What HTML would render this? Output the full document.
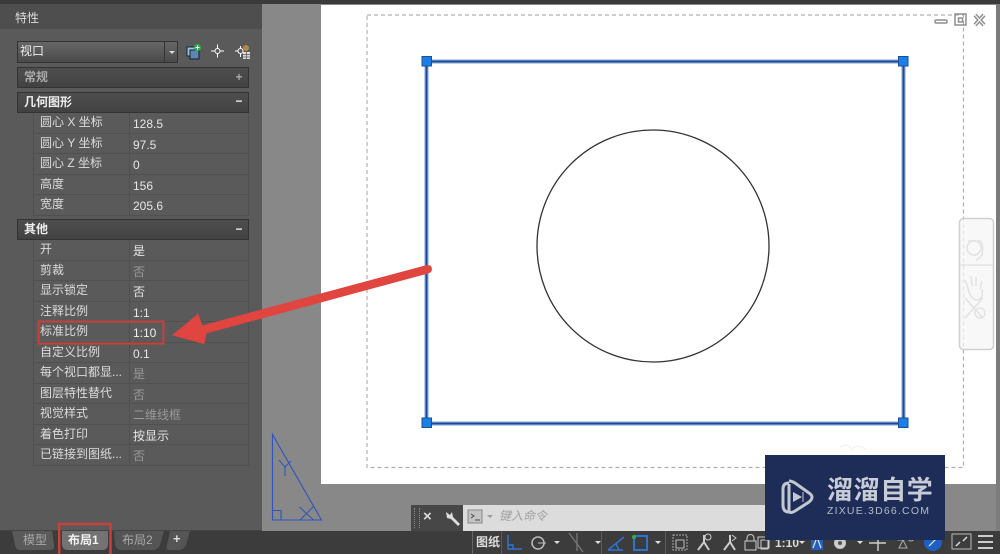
<!DOCTYPE html>
<html><head><meta charset="utf-8">
<style>
html,body{margin:0;padding:0;background:#888}
#r{position:relative;width:1000px;height:554px;overflow:hidden;background:#888;font-family:"Liberation Sans","Noto Sans CJK SC",sans-serif;font-size:12px;color:#e0e0e0;filter:blur(.35px)}
#r div,#r span{position:absolute;white-space:nowrap}
.h{left:17px;width:232px;height:20px;background:linear-gradient(#4e4e4e,#424242);border:1px solid #333;box-sizing:border-box;line-height:19px;font-weight:bold;color:#eee;text-indent:6px}
.s{left:217px;width:8px;text-align:center;font-weight:bold;text-indent:0}
.row{left:33px;width:216px;height:20.5px;border-bottom:1px solid #505050;box-sizing:border-box}
.l{left:7px;top:1px;line-height:16px;color:#dcdcdc}
.v{left:100px;top:3px;line-height:16px;color:#e6e6e6}
.d{color:#999}
</style></head><body><div id="r">
<div style="left:0;top:0;width:1000px;height:4px;background:#3a3a3a"></div>
<div style="left:0;top:4px;width:262px;height:527px;background:#5a5a5a"></div>
<div style="left:0;top:4px;width:262px;height:25px;background:#4e4e4e"></div>
<div style="left:15px;top:10px;font-size:12px;color:#ddd;line-height:17px">特性</div>

<div style="left:17px;top:41px;width:161px;height:22px;background:linear-gradient(#666,#4a4a4a);border:1px solid #333;box-sizing:border-box"></div>
<div style="left:20px;top:43px;line-height:17px;color:#eee">视口</div>
<div style="left:164px;top:42px;width:1px;height:20px;background:#333"></div>
<div style="left:169px;top:51px;width:0;height:0;border:3px solid transparent;border-top:3px solid #ddd"></div>
<svg style="position:absolute;left:180px;top:38px" width="75" height="28" viewBox="0 0 75 28">
<rect x="7" y="9" width="8" height="9" fill="#9fc0dd" stroke="#123"/><rect x="10" y="12" width="9" height="9" fill="#5d87b0" stroke="#123"/><circle cx="17.500" cy="9.500" r="3.500" fill="#2fae4a"/><path d="M15.500 9.500h4M17.500 7.500v4" stroke="#fff"/>
<circle cx="37.500" cy="13" r="2.500" fill="none" stroke="#fff"/><path d="M31 13h4M40 13h4M37.500 6.500v4M37.500 15.500v4" stroke="#fff"/>
<circle cx="60.500" cy="13" r="2.500" fill="none" stroke="#fff"/><path d="M55 13h3M60.500 8v2M60.500 16v3" stroke="#fff"/><circle cx="66" cy="10" r="3" fill="#b08a4a"/><rect x="63" y="14" width="7" height="7" fill="#ddd"/><path d="M63 16.500h7M63 19h7M66.500 14v7" stroke="#555" stroke-width=".7"/>
</svg>

<div class="h" style="top:67px;height:21px;color:#aaa">常规<span class="s" style="top:0">+</span></div>
<div class="h" style="top:92px;height:21px">几何图形<span class="s" style="top:-1px">−</span></div>
<div class="h" style="top:219px;height:21px">其他<span class="s" style="top:0">−</span></div>

<div style="left:33px;top:113px;width:1px;height:102px;background:#505050"></div>
<div style="left:129px;top:113px;width:1px;height:102px;background:#505050"></div>
<div style="left:248px;top:113px;width:1px;height:102px;background:#505050"></div>
<div style="left:33px;top:240px;width:1px;height:226px;background:#505050"></div>
<div style="left:129px;top:240px;width:1px;height:226px;background:#505050"></div>
<div style="left:248px;top:240px;width:1px;height:226px;background:#505050"></div>

<div class="row" style="top:113px"><span class="l">圆心 X 坐标</span><span class="v">128.5</span></div>
<div class="row" style="top:133.500px"><span class="l">圆心 Y 坐标</span><span class="v">97.5</span></div>
<div class="row" style="top:154px"><span class="l">圆心 Z 坐标</span><span class="v">0</span></div>
<div class="row" style="top:174.500px"><span class="l">高度</span><span class="v">156</span></div>
<div class="row" style="top:195px"><span class="l">宽度</span><span class="v">205.6</span></div>

<div class="row" style="top:240px"><span class="l">开</span><span class="v">是</span></div>
<div class="row" style="top:260.500px"><span class="l">剪裁</span><span class="v d">否</span></div>
<div class="row" style="top:281px"><span class="l">显示锁定</span><span class="v">否</span></div>
<div class="row" style="top:301.500px"><span class="l">注释比例</span><span class="v">1:1</span></div>
<div class="row" style="top:322px"><span class="l">标准比例</span><span class="v" style="color:#f0f0f0">1:10</span></div>
<div class="row" style="top:342.500px"><span class="l">自定义比例</span><span class="v">0.1</span></div>
<div class="row" style="top:363px"><span class="l">每个视口都显...</span><span class="v d">是</span></div>
<div class="row" style="top:383.500px"><span class="l">图层特性替代</span><span class="v d">否</span></div>
<div class="row" style="top:404px"><span class="l">视觉样式</span><span class="v d">二维线框</span></div>
<div class="row" style="top:424.500px"><span class="l">着色打印</span><span class="v">按显示</span></div>
<div class="row" style="top:445px"><span class="l">已链接到图纸...</span><span class="v d">否</span></div>

<div style="left:321px;top:5px;width:675px;height:479px;background:#fff"></div>
<div style="left:996px;top:4px;width:4px;height:527px;background:#7c7c7c"></div>

<svg style="position:absolute;left:0;top:0" width="1000" height="554" viewBox="0 0 1000 554">
<rect x="367" y="15" width="596.500" height="452.500" fill="none" stroke="#b0b0b0" stroke-width="1.200" stroke-dasharray="4 3"/>
<path d="M840 447q8-5 12 3q5-8 14 0" fill="none" stroke="#eee"/>
<rect x="426.500" y="61.500" width="477" height="362" fill="none" stroke="#bcd0f0" stroke-width="5"/>
<rect x="426.500" y="61.500" width="477" height="362" fill="none" stroke="#1f4a96" stroke-width="2.200"/>
<circle cx="653" cy="246" r="116" fill="none" stroke="#333" stroke-width="1.300"/>
<g fill="#1c7fe8" stroke="#1a4f9a"><rect x="422" y="56.500" width="9.500" height="9.500"/><rect x="898.500" y="56.500" width="9.500" height="9.500"/><rect x="422" y="418" width="9.500" height="9.500"/><rect x="898.500" y="418" width="9.500" height="9.500"/></g>
<g fill="none" stroke="#2f55bb" stroke-width="1.100"><path d="M272.500 434.500V520H321.500ZM272.500 510.500h8.500V520M279 460l6 7 6-6M285 467v9M299.500 507l14 13M300 520l13-13"/></g>
<g fill="none" stroke="#8f8f8f" stroke-width="1.500"><rect x="935" y="20" width="12" height="3" rx="1"/><rect x="955" y="14" width="11" height="11"/><rect x="958.500" y="18" width="4" height="4"/><path d="M975 15l9 10M984 15l-9 10" stroke-width="4"/><path d="M975 15l9 10M984 15l-9 10" stroke="#f2f2f2" stroke-width="1.300"/></g>
<rect x="959.500" y="218.500" width="34" height="131" rx="4" fill="#f6f6f6" fill-opacity=".75" stroke="#cfcfcf" stroke-width="1.500"/>
<g fill="none" stroke="#e2e2e2" stroke-width="1.500"><circle cx="974" cy="248" r="7"/><path d="M968 241h12q4 3 2 14l-6 6M960 265h33"/><path d="M968 288l-3-8M972 286l-1-10M976 286v-9M980 289l2-8M968 288q2 10 8 12 8 0 6-11"/><path d="M965 298l18 20M983 298l-18 20"/><circle cx="980" cy="313" r="5"/></g>
<path d="M173 335L198 314.500L202 326L427 265.500Q431 265 431.500 269Q431.500 272 428 273L206 333L204 343.500Z" fill="#e0453f" stroke="#e0453f" stroke-linejoin="round"/>
<rect x="38.500" y="321.500" width="125" height="22" fill="none" stroke="#c8403c" stroke-width="2"/>
</svg>

<div style="left:0;top:531px;width:1000px;height:23px;background:#3c3c3c"></div>
<div style="left:0;top:530px;width:262px;height:1px;background:#444"></div>
<svg style="position:absolute;left:0;top:520px" width="200" height="34" viewBox="0 0 200 34">
<path d="M12 11H52L54 25Q55 30 50 30H20Q16 30 15 25Z" fill="#5a5a5a"/>
<path d="M62 11H108V24Q108 30 102 30H68Q62 30 62 24Z" fill="#737373"/>
<path d="M114 11H164L160 25Q158 30 152 30H122Q116 30 115 25Z" fill="#555"/>
<path d="M170 11H190L186 25Q184 30 178 30H169Q165 30 167 25Z" fill="#555"/>
<path d="M59.200 35V4H110.500V35" fill="none" stroke="#c8403c" stroke-width="2.500"/>
</svg>
<div style="left:23px;top:532px;line-height:16px;color:#a8a8a8">模型</div>
<div style="left:68px;top:532px;line-height:16px;font-weight:bold;color:#f2f2f2">布局1</div>
<div style="left:122px;top:532px;line-height:16px;color:#a8a8a8">布局2</div>
<div style="left:173px;top:531px;line-height:16px;font-weight:bold;color:#ddd;font-size:13px">+</div>

<div style="left:411px;top:505px;width:52px;height:26px;background:#474747"></div>
<div style="left:463px;top:505px;width:302px;height:26px;background:#dcdcdc"></div>
<div style="left:414px;top:508px;width:4px;height:20px;border-left:1px dotted #888;border-right:1px dotted #888"></div>
<div style="left:423px;top:507px;font-size:15px;line-height:20px;font-weight:bold;color:#ddd">×</div>
<svg style="position:absolute;left:444px;top:509px" width="130" height="18" viewBox="0 0 130 18">
<path d="M2 3l4 3 2-3 1 5 7 7-2 2-7-7-4-1z" fill="#ddd"/>
<rect x="24" y="1" width="14" height="13" fill="#c4c4c4" stroke="#888"/><path d="M27 5l3 2-3 2M31 11h5" stroke="#445" fill="none"/>
<path d="M43 6h6l-3 3z" fill="#999"/>
</svg>
<div style="left:499px;top:508px;font-style:italic;line-height:17px;color:#a2a2a2">键入命令</div>

<div style="left:472px;top:531px;width:1px;height:23px;background:#666"></div>
<div style="left:476px;top:534px;line-height:17px;font-weight:bold;color:#ddd">图纸</div>
<svg style="position:absolute;left:500px;top:531px" width="500" height="23" viewBox="0 0 500 23">
<g stroke="#5a5a5a"><path d="M1.500 0v23M101.500 0v23M165.500 0v23"/></g>
<path d="M8 4v14h14M8 14h5v4" fill="none" stroke="#2e73d0" stroke-width="1.500"/>
<circle cx="38" cy="12" r="6" fill="none" stroke="#bbb" stroke-width="1.500"/><path d="M38 12h8" stroke="#bbb"/>
<path d="M54 10h6l-3 3zM95 10h6l-3 3zM155 10h6l-3 3z" fill="#ddd"/>
<path d="M69 2l14 19M77 2v18" stroke="#777" stroke-width="1.300" fill="none"/>
<path d="M108 19l16-13M108 19h15M116 13l3 6" stroke="#2e73d0" stroke-width="1.500" fill="none"/>
<path d="M134 5h13v14h-13z" fill="none" stroke="#2e73d0" stroke-width="2"/><circle cx="134" cy="6" r="2" fill="#2fae4a"/>
<rect x="173" y="4" width="14" height="15" fill="none" stroke="#aaa" stroke-dasharray="2 1"/><rect x="176" y="9" width="8" height="8" fill="none" stroke="#bbb"/>
<path d="M198 19l6-8 5 8M204 11V4" stroke="#ccc" stroke-width="2" fill="none"/><circle cx="208" cy="6" r="3" fill="none" stroke="#ccc"/>
<path d="M224 19l6-8 5 8M230 11V4" stroke="#ccc" stroke-width="2" fill="none"/><path d="M232 4l4 3-4 3" stroke="#ccc" fill="none"/>
<rect x="245" y="10" width="11" height="9" fill="none" stroke="#ccc"/><path d="M247 10V7a3.500 3.500 0 0 1 7 0v3" fill="none" stroke="#ccc"/>
<rect x="258" y="6" width="11" height="11" fill="none" stroke="#ccc"/><rect x="261" y="9" width="7" height="9" fill="none" stroke="#ccc"/>
<path d="M299 10h6l-3 3z" fill="#ddd"/>
<rect x="311" y="2" width="12" height="17" fill="#245fc0"/><path d="M313 17l4-11 4 11" stroke="#ddd" stroke-width="1.300" fill="none"/>
<circle cx="340" cy="12" r="6" fill="#ccc"/><circle cx="340" cy="12" r="2" fill="#555"/>
<path d="M357 10h6l-3 3z" fill="#ddd"/>
<path d="M378 4v16M369 12h17" stroke="#ccc" stroke-width="1.500"/>
<path d="M399 17l4-8 4 8zM398 4h6v5h-6z" fill="none" stroke="#aaa"/><circle cx="411" cy="7" r="3" fill="none" stroke="#aaa"/>
<circle cx="433" cy="11" r="9" fill="#1f5fc4"/><path d="M429 15l8-8" stroke="#cfe" stroke-width="1.200"/>
<rect x="452" y="3" width="19" height="15" fill="none" stroke="#bbb"/><path d="M456 15l4-4M467 6l-4 4" stroke="#ddd" stroke-width="1.500"/>
<path d="M478 5h15M478 11h15M478 17h15" stroke="#ccc" stroke-width="2"/>
</svg>
<div style="left:775px;top:535px;line-height:16px;color:#ddd;font-weight:bold">1:10</div>

<div style="left:765px;top:455px;width:180px;height:85px;background:#1e2d57"></div>
<svg style="position:absolute;left:778px;top:478px" width="40" height="40" viewBox="0 0 40 40">
<path d="M11 5Q5 5 5 11V27Q5 34 11 34" fill="none" stroke="#c2c7d2" stroke-width="3"/>
<path d="M11 3Q14 3 17 5L31 15Q37 19 31 24L17 33Q12 36 11 33V6" fill="none" stroke="#c2c7d2" stroke-width="3"/>
<path d="M15 14l9 5-9 5z" fill="#c2c7d2"/><path d="M25 14v10" stroke="#c2c7d2"/>
</svg>
<div style="left:827px;top:475px;font-size:26px;line-height:30px;letter-spacing:.6px;font-weight:bold;color:#c8ccd6">溜溜自学</div>
<div style="left:827px;top:504px;font-size:10.500px;line-height:14px;letter-spacing:1.200px;color:#b5bac8">ZIXUE.3D66.COM</div>
</div></body></html>
